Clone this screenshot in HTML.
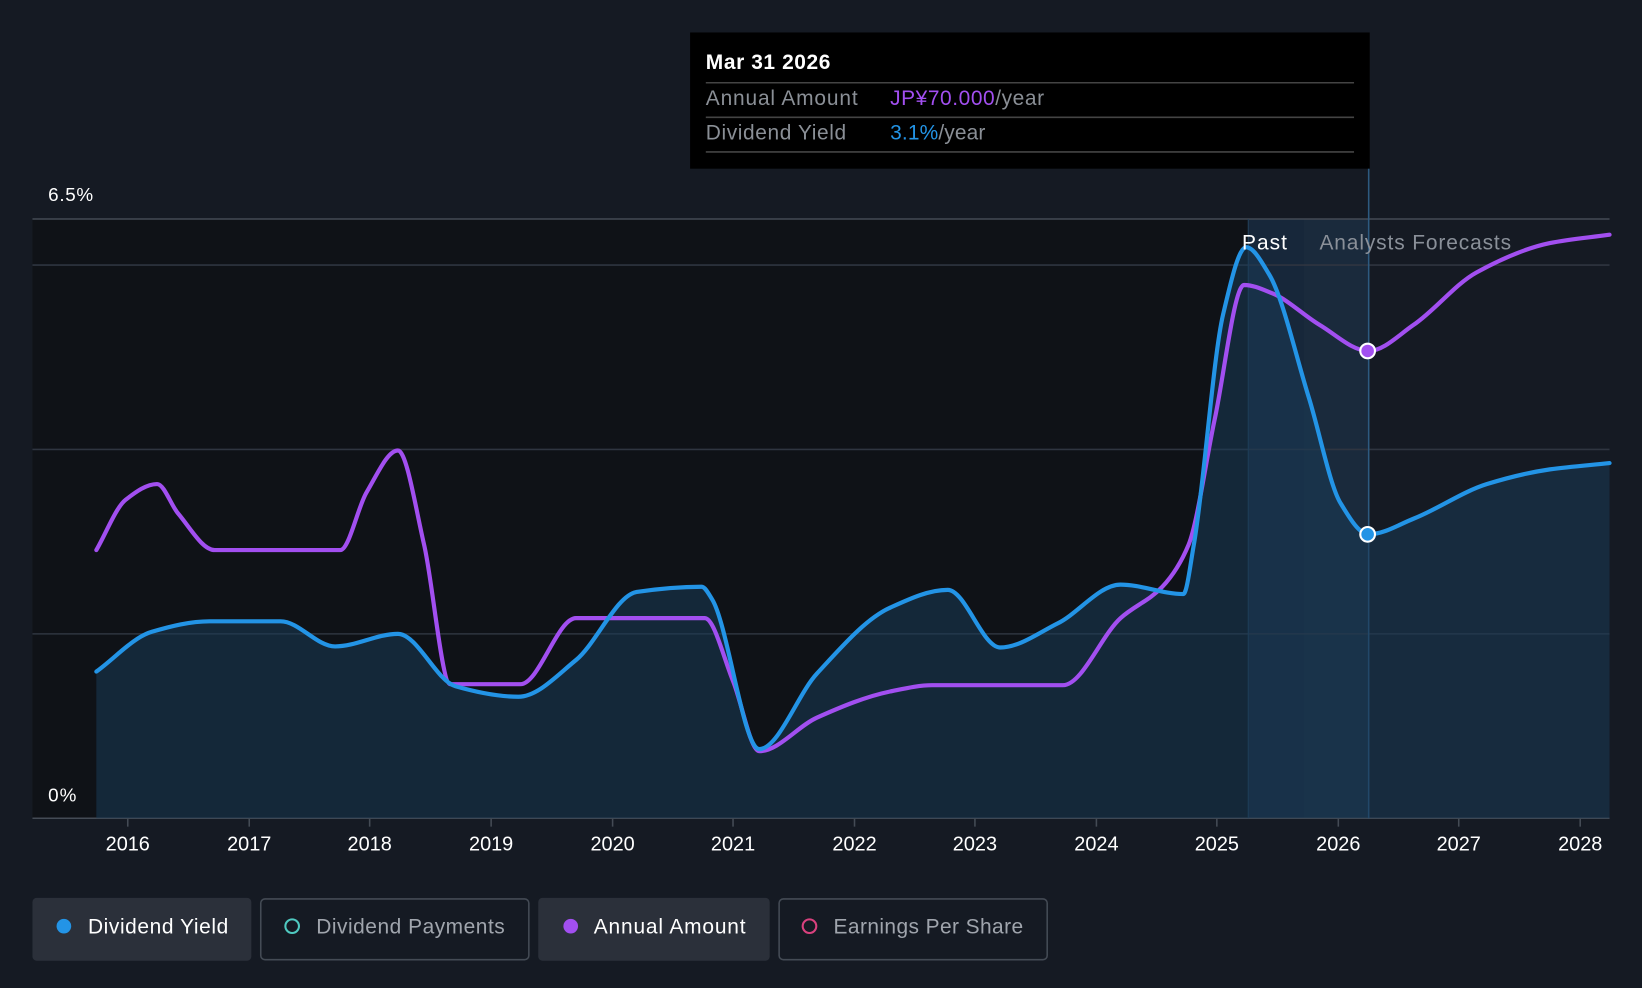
<!DOCTYPE html>
<html><head><meta charset="utf-8"><style>
html,body{margin:0;padding:0;background:#151a23;width:1642px;height:988px;overflow:hidden}
svg{display:block;font-family:"Liberation Sans",Roboto,sans-serif}
</style></head><body>
<svg width="1642" height="988" viewBox="0 0 1568 943" preserveAspectRatio="none">
<rect width="1568" height="943" fill="#151a23"/>
<rect x="31" y="209" width="1161" height="572" fill="#0f1217"/>
<rect x="1192" y="209" width="115" height="572" fill="#17273a"/>
<rect x="1245" y="209" width="62" height="572" fill="#1a2a3c"/>
<g stroke="#2f3540" stroke-width="1.5">
<line x1="31" y1="209" x2="1537" y2="209" stroke="#444b55"/>
<line x1="31" y1="253" x2="1537" y2="253"/>
<line x1="31" y1="429" x2="1537" y2="429"/>
<line x1="31" y1="605" x2="1537" y2="605"/>
<line x1="31" y1="781" x2="1537" y2="781" stroke="#444b55"/>
</g>
<line x1="1307" y1="160" x2="1307" y2="781" stroke="#2d5a80" stroke-width="1.5"/>
<line x1="1192" y1="209" x2="1192" y2="781" stroke="#24405a" stroke-width="1"/>
<path id="area" fill="#1a3a55" fill-opacity="0.55" d=""/>
<path id="pl" fill="none" stroke="#a24ff0" stroke-width="4" stroke-linejoin="round" stroke-linecap="round" d=""/>
<path id="bl" fill="none" stroke="#2394e6" stroke-width="4" stroke-linejoin="round" stroke-linecap="round" d=""/>
<circle cx="1306" cy="335" r="7" fill="#a24ff0" stroke="#fff" stroke-width="2"/>
<circle cx="1306" cy="510" r="7" fill="#2394e6" stroke="#fff" stroke-width="2"/>
<text x="1186" y="238" fill="#fff" font-size="20" textLength="43">Past</text>
<text x="1260" y="238" fill="#8a9099" font-size="20" textLength="183">Analysts Forecasts</text>
<text x="46" y="192" fill="#fff" font-size="18" textLength="43">6.5%</text>
<text x="46" y="765" fill="#fff" font-size="18" textLength="27">0%</text>
<g fill="#fff" font-size="19" text-anchor="middle">
<text x="122" y="812">2016</text><text x="238" y="812">2017</text><text x="353" y="812">2018</text><text x="469" y="812">2019</text><text x="585" y="812">2020</text><text x="700" y="812">2021</text><text x="816" y="812">2022</text><text x="931" y="812">2023</text><text x="1047" y="812">2024</text><text x="1162" y="812">2025</text><text x="1278" y="812">2026</text><text x="1393" y="812">2027</text><text x="1509" y="812">2028</text>
</g>
<g stroke="#444b55" stroke-width="1.5">
<line x1="122" y1="781" x2="122" y2="789"/><line x1="238" y1="781" x2="238" y2="789"/><line x1="353" y1="781" x2="353" y2="789"/><line x1="469" y1="781" x2="469" y2="789"/><line x1="585" y1="781" x2="585" y2="789"/><line x1="700" y1="781" x2="700" y2="789"/><line x1="816" y1="781" x2="816" y2="789"/><line x1="931" y1="781" x2="931" y2="789"/><line x1="1047" y1="781" x2="1047" y2="789"/><line x1="1162" y1="781" x2="1162" y2="789"/><line x1="1278" y1="781" x2="1278" y2="789"/><line x1="1393" y1="781" x2="1393" y2="789"/><line x1="1509" y1="781" x2="1509" y2="789"/>
</g>
<rect x="659" y="31" width="649" height="130" fill="#000"/>
<text x="674" y="66" fill="#fff" font-size="20" font-weight="bold" textLength="119">Mar 31 2026</text>
<line x1="674" y1="79" x2="1293" y2="79" stroke="#444" stroke-width="1.5"/>
<text x="674" y="100" fill="#8a8f96" font-size="20" textLength="145">Annual Amount</text>
<text x="850" y="100" font-size="20" textLength="147"><tspan fill="#a24ff0">JP¥70.000</tspan><tspan fill="#8a8f96">/year</tspan></text>
<line x1="674" y1="112" x2="1293" y2="112" stroke="#444" stroke-width="1.5"/>
<text x="674" y="133" fill="#8a8f96" font-size="20" textLength="134">Dividend Yield</text>
<text x="850" y="133" font-size="20" textLength="91"><tspan fill="#2394e6">3.1%</tspan><tspan fill="#8a8f96">/year</tspan></text>
<line x1="674" y1="145" x2="1293" y2="145" stroke="#444" stroke-width="1.5"/>
<rect x="31" y="857" width="209" height="60" rx="4" fill="#2b303a"/>
<circle cx="61" cy="884" r="7" fill="#2394e6"/>
<text x="84" y="891" fill="#fff" font-size="20" textLength="134">Dividend Yield</text>
<rect x="249" y="858" width="256" height="58" rx="4" fill="none" stroke="#444b55" stroke-width="1.5"/>
<circle cx="279" cy="884" r="6.5" fill="none" stroke="#4fc9c0" stroke-width="2"/>
<text x="302" y="891" fill="#a0a5ad" font-size="20" textLength="180">Dividend Payments</text>
<rect x="514" y="857" width="221" height="60" rx="4" fill="#2b303a"/>
<circle cx="545" cy="884" r="7" fill="#a24ff0"/>
<text x="567" y="891" fill="#fff" font-size="20" textLength="145">Annual Amount</text>
<rect x="744" y="858" width="256" height="58" rx="4" fill="none" stroke="#444b55" stroke-width="1.5"/>
<circle cx="773" cy="884" r="6.5" fill="none" stroke="#d9417e" stroke-width="2"/>
<text x="796" y="891" fill="#a0a5ad" font-size="20" textLength="181">Earnings Per Share</text>
</svg>
<script>
var B=[[92,641],[145,603],[200,593],[268,593],[320,617],[380,605],[435,655],[495,665],[550,630],[608,565],[670,560],[680,572],[725,715],[780,643],[850,580],[905,563],[955,618],[1010,595],[1070,558],[1130,567],[1140,520],[1168,300],[1190,236],[1212,262],[1250,380],[1280,480],[1307,510],[1350,495],[1420,462],[1480,448],[1537,442]];
var P=[[92,525],[120,477],[150,462],[170,490],[205,525],[325,525],[350,470],[380,430],[405,520],[430,653],[497,653],[550,590],[673,590],[700,650],[725,717],[780,685],[850,660],[890,654],[1015,654],[1070,590],[1110,560],[1135,520],[1160,400],[1188,272],[1215,280],[1260,310],[1307,335],[1350,310],[1410,260],[1480,232],[1537,224]];
function mono(p){var n=p.length,s=[],m=[];
for(var i=0;i<n-1;i++)s[i]=(p[i+1][1]-p[i][1])/(p[i+1][0]-p[i][0]);
m[0]=s[0];m[n-1]=s[n-2];
for(var i=1;i<n-1;i++){if(s[i-1]*s[i]<=0)m[i]=0;else{var h0=p[i][0]-p[i-1][0],h1=p[i+1][0]-p[i][0];m[i]=3*(h0+h1)/((2*h1+h0)/s[i-1]+(h1+2*h0)/s[i]);}}
var d="M"+p[0][0]+","+p[0][1];
for(var i=0;i<n-1;i++){var h=(p[i+1][0]-p[i][0])/3;
d+=" C"+(p[i][0]+h).toFixed(1)+","+(p[i][1]+m[i]*h).toFixed(1)+" "+(p[i+1][0]-h).toFixed(1)+","+(p[i+1][1]-m[i+1]*h).toFixed(1)+" "+p[i+1][0]+","+p[i+1][1];}
return d;}
var db=mono(B);
document.getElementById("bl").setAttribute("d",db);
document.getElementById("pl").setAttribute("d",mono(P));
document.getElementById("area").setAttribute("d",db+" L1537,781 L92,781 Z");
</script>
</body></html>
